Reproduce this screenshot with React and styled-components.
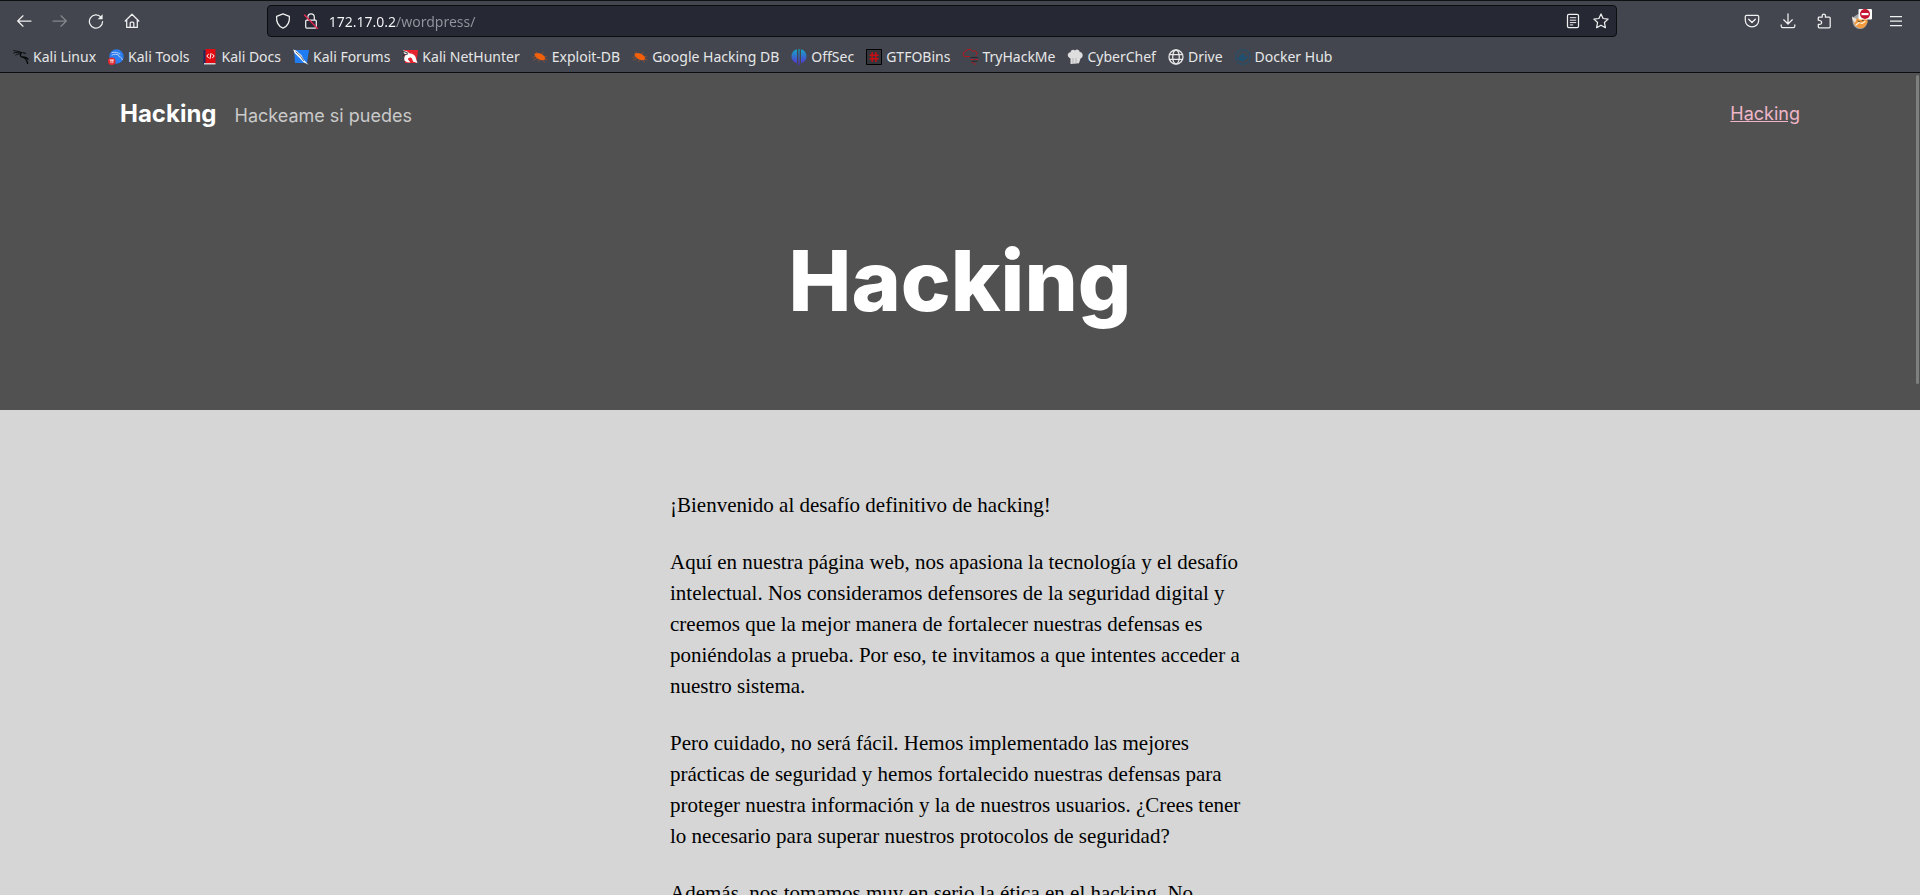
import React from "react";
import styled, { createGlobalStyle } from "styled-components";

const GlobalStyle = createGlobalStyle`
  *, *::before, *::after { box-sizing: border-box; }
  body { margin: 0; background: #d6d6d6; }
`;

const uiFont = `"Noto Sans", "Open Sans", sans-serif`;
const siteFont = `Inter, "Liberation Sans", sans-serif`;

const Browser = styled.div`
  display: flex;
  flex-direction: column;
  height: 100vh;
  overflow: hidden;
`;

const Chrome = styled.header`
  flex: none;
  background: #43464e;
  border-top: 1px solid #0f1014;
  border-bottom: 1px solid #0c0d10;
  color: #e6e6e8;
  font-family: ${uiFont};
  font-size: 14px;
`;

const Toolbar = styled.div`
  display: flex;
  align-items: center;
  height: 40px;
  padding: 0 6px;
`;

const ToolGroup = styled.div`
  display: flex;
  flex: none;
`;

const FlexibleSpace = styled.div`
  flex: 13 1 0;
`;

const ToolButton = styled.button`
  display: flex;
  align-items: center;
  justify-content: center;
  width: ${(p) => (p.$narrow ? "28px" : "36px")};
  height: 32px;
  padding: 0;
  border: 0;
  background: none;
  color: ${(p) => (p.disabled ? "#85878c" : "#f0f0f1")};
`;

const AddressBar = styled.form`
  display: flex;
  flex: 150 1 0;
  align-items: center;
  height: 32px;
  padding: 0 1px;
  border: 1px solid #0c0d10;
  border-radius: 4px;
  background: #262834;
`;

const AddressInput = styled.input`
  flex: 1;
  min-width: 0;
  height: 28px;
  padding: 0 0 0 4px;
  border: 0;
  outline: 0;
  font: 14px ${uiFont};
  color: #fbfbfe;
  background: linear-gradient(to right, #fbfbfe 71px, #94959c 71px);
  background-clip: text;
  -webkit-text-fill-color: transparent;
`;

const Bookmarks = styled.nav`
  display: flex;
  align-items: center;
  gap: 12px;
  height: 31px;
  padding: 0 13px;
`;

const Bookmark = styled.a`
  display: flex;
  flex: none;
  align-items: center;
  gap: 4px;
  line-height: 20px;
  color: inherit;
  text-decoration: none;
`;

const Viewport = styled.div`
  position: relative;
  flex: 1;
  min-height: 0;
  overflow: hidden;
`;

const ScrollThumb = styled.div`
  position: absolute;
  top: 2px;
  right: 1px;
  width: 3px;
  height: 42%;
  max-height: 309px;
  border-radius: 2px;
  background: #7b807f;
`;

const Hero = styled.div`
  padding-bottom: 83px;
  background: #515151;
  color: #fff;
  font-family: ${siteFont};
`;

const SiteHeader = styled.header`
  display: flex;
  align-items: center;
  justify-content: space-between;
  width: calc(100% - 80px);
  max-width: 1680px;
  height: 82px;
  margin: 0 auto;
`;

const Branding = styled.div`
  display: flex;
  align-items: baseline;
  gap: 18px;
`;

const SiteTitle = styled.a`
  font-size: 24px;
  font-weight: 700;
  line-height: 30px;
  color: #fff;
  text-decoration: none;
`;

const Tagline = styled.span`
  font-size: 18px;
  font-weight: 400;
  color: #cacaca;
`;

const MenuLink = styled.a`
  font-size: 18px;
  font-weight: 400;
  line-height: 22px;
  color: #f0b6c8;
  text-decoration: underline;
`;

const PageTitle = styled.h1`
  margin: 80px 0 0;
  font-size: 84px;
  font-weight: 800;
  line-height: 92px;
  text-align: center;
`;

const Article = styled.main`
  width: calc(100% - 40px);
  max-width: 580px;
  margin: 0 auto;
  padding: 80px 0;
  font: 21px / 31px "Liberation Serif", serif;
  color: #000;
`;

const Paragraph = styled.p`
  margin: 0 0 26px;
`;

const Icon = ({ children, size = 16, ...rest }) => (
  <svg
    width={size}
    height={size}
    viewBox="0 0 16 16"
    fill="none"
    stroke="currentColor"
    strokeWidth="1.25"
    strokeLinecap="round"
    strokeLinejoin="round"
    aria-hidden="true"
    {...rest}
  >
    {children}
  </svg>
);

const BackIcon = () => (
  <Icon><path d="M7 2.8 1.7 8 7 13.2M1.9 8H15" /></Icon>
);
const ForwardIcon = () => (
  <Icon><path d="M9 2.8 14.3 8 9 13.2M14.1 8H1" /></Icon>
);
const ReloadIcon = () => (
  <Icon>
    <path d="M13 4.2A6.6 6.6 0 1 0 14.6 8.5" />
    <path d="M14.6 1.2v5H9.6z" fill="currentColor" stroke="none" />
  </Icon>
);
const HomeIcon = () => (
  <Icon>
    <path d="M1.2 8 8 1.2 14.8 8M2.7 6.8v7.6h10.6V6.8" />
    <path d="M6.2 14.2V10a1 1 0 0 1 1-1h1.6a1 1 0 0 1 1 1v4.2" />
  </Icon>
);
const ShieldIcon = () => (
  <Icon><path d="M8 .9 14.4 3.3c.4 5.6-1.6 10-6.4 11.9C3.2 13.3 1.2 8.9 1.6 3.3z" /></Icon>
);
const InsecureIcon = () => (
  <Icon>
    <rect x="2.7" y="7" width="10.6" height="8" rx="1" />
    <path d="M4.9 6.8V4a3.2 3.2 0 0 1 6.4 0v2.8" />
    <path d="M1.5 2 14.5 15.400" stroke="#e22850" strokeWidth="1.4" />
  </Icon>
);
const ReaderIcon = () => (
  <Icon>
    <rect x="2.5" y="1.4" width="11" height="13.2" rx="1.4" />
    <path d="M5.2 4.7h5.6M5.2 7.2h5.6M5.2 9.6h5.6M5.2 11.9h2.6" strokeWidth="1" />
  </Icon>
);
const StarIcon = () => (
  <Icon>
    <path d="m8 .9 2.1 4.6 5 .6-3.7 3.4 1 5.2L8 12.2l-4.4 2.5 1-5.2L.9 6.1l5-.6z" />
  </Icon>
);
const PocketIcon = () => (
  <Icon>
    <path d="M2.6 2.3h10.8c.8 0 1.3.5 1.3 1.3v3.6a6.7 6.7 0 0 1-13.4 0V3.6c0-.8.5-1.3 1.3-1.3z" />
    <path d="m4.7 6.3 3.3 3.1 3.3-3.1" strokeWidth="1.4" />
  </Icon>
);
const DownloadIcon = () => (
  <Icon>
    <path d="M8 .8v10M3.7 6.8 8 11l4.3-4.2M1.2 11.8v1.3c0 .9.7 1.6 1.6 1.6h10.4c.9 0 1.6-.7 1.6-1.6v-1.3" />
  </Icon>
);
const ExtensionIcon = () => (
  <Icon>
    <path d="M2.3 7.2V5c0-.5.3-.8.8-.8h3.1V2.6a1.6 1.6 0 0 1 3.2 0v1.6h3.8c.6 0 1 .4 1 1v8.6c0 .6-.4 1-1 1H3.3c-.6 0-1-.4-1-1v-2.4h1.4a1.900 1.900 0 0 0 0-3.900z" />
  </Icon>
);
const MenuIcon = () => (
  <Icon strokeLinecap="butt"><path d="M2 3.500h12M2 8h12M2 12.500h12" /></Icon>
);
const ProxyIcon = () => (
  <Icon size={24} viewBox="0 0 24 24" stroke="none">
    <circle cx="12" cy="12.500" r="7.500" fill="#a8a9ad" />
    <path d="M4 8.500 9 10l4-3 6 2.500.5 4-3.500 5-4 1-4.500-2.500z" fill="#f39a3c" />
    <path d="M4 7.500 8.500 10 7 14 4.500 11z" fill="#e9e4dc" />
    <path d="m8 16 3-2.500 3 1 3-2" stroke="#fff0d8" strokeWidth="1.200" />
    <path d="m10 12 2 .8m2-1 2-.8" stroke="#54422f" strokeWidth="1" />
    <rect x="10.500" y="0" width="13.500" height="10.500" rx="1" fill="#fff" />
    <circle cx="17" cy="5" r="5" fill="#c41230" />
    <path d="M13.500 4h7v2.200h-7z" fill="#fff" />
  </Icon>
);

const KaliIcon = () => (
  <Icon strokeLinecap="butt" stroke="#08090b">
    <path d="M.5 1.500c2.500.8 5 .2 8.500 2.300M.3 4.200C3 3 5.500 3.200 8.500 4.200M2.500 6.200c1.500-1.200 3.500-1.500 5.500-1.200" strokeWidth=".9" />
    <path d="M8.500 3.600C6.800 5 7 7.400 9 8.200c3.400.5 4.800 2 5.800 6.800M9 8.200c2.600-.6 4.700.2 6.500 2.300M9.500 3.500l3.500 1" strokeWidth="1.300" />
  </Icon>
);
const ToolsIcon = () => (
  <Icon stroke="none">
    <circle cx="8.500" cy="7.500" r="7.200" fill="#2b7cf0" />
    <path d="M4 3.500c3-.6 6 0 8 1.500M4 6c2.600-1 4.500-.8 6.500 0 0 1.600 1 1.900 2 2.200 1 .5 1.700 1.500 1.900 2.500" stroke="#cfe2fc" strokeWidth=".8" />
    <circle cx="3.800" cy="12.200" r="3.800" fill="#e0282e" />
    <path d="M2 11h3.600M3 11v2.800M4.800 11v2.800" stroke="#fff" strokeWidth=".8" />
  </Icon>
);
const DocsIcon = () => (
  <Icon stroke="none">
    <path d="M1.500 1h3v14h-3z" fill="#1c285f" />
    <path d="M3.500 0h10v14h-10z" fill="#e30b12" />
    <path d="M2 14h11.500v1.500H2z" fill="#d8d0d0" />
    <path d="M6.500 5.200 4.800 7l1.700 1.800M10.500 5.200 12.200 7l-1.700 1.800M9 4.500 8 9.500" stroke="#fff" strokeWidth="1" />
  </Icon>
);
const ForumsIcon = () => (
  <Icon stroke="none">
    <path d="M1 1h15l-2 13H2z" fill="#1f7cf2" />
    <path d="M.2.5 3 1.500l5.500 4.700 2.300 4.500 4.700 5-5-2.500-4.200-4.500L1.500 4z" fill="#f7f7f7" />
    <path d="m3 3 5 4.500 2.500 4" stroke="#45484f" strokeWidth=".8" />
  </Icon>
);
const NetHunterIcon = () => (
  <Icon stroke="none">
    <path d="M2 1h14l-1.500 13H3z" fill="#e4232f" />
    <path d="M2.500 11.500C1.500 7.500 4 4.500 8 4.500c3.500 0 6 2.500 6 5.500l1.500 4-4.500-1.500-1-3c-1.500-1.800-4-1-4 1l2.500 3-3.500-.3z" fill="#fff" />
    <path d="M.5 1.200 5 2.300l3 2.500-4.500 2z" fill="#f4f4f4" />
    <path d="M.5 2 5.500 4M1.500 6.200l4-1.200" stroke="#202127" strokeWidth=".9" />
  </Icon>
);
const BugIcon = () => (
  <Icon stroke="#b5552a" strokeWidth=".6">
    <path d="M2.500 4.500C6 3.200 9.500 4 11.500 6.500c1.500 1.200 2 2.500 1.500 4-2.500 1.200-6 .7-8-1.500C3.500 8 2.300 6.500 2.500 4.500z" fill="#f2600c" stroke="none" />
    <path d="M3 8 .8 8.200M5 4.200 4 2.800M10 5l1-1.500M12.500 7.500l2.300-.3M13 10l2.300.8M11 11l1.500 2M7.500 10.800l-1 1.800M5 9.500 1.500 11" />
  </Icon>
);
const OffSecIcon = () => (
  <Icon stroke="none">
    <defs>
      <linearGradient id="offsec" gradientUnits="userSpaceOnUse" x1="0" y1="0" x2="0" y2="16">
        <stop offset="0" stopColor="#12a9c8" />
        <stop offset="1" stopColor="#5a2bd0" />
      </linearGradient>
    </defs>
    <path d="M6 .3v14C2.500 13.500.5 11 .5 7.600.5 4 2.500 1.200 6 .3zM10 .3v14c3.500-.8 5.500-3.300 5.500-6.700C15.500 4 13.500 1.200 10 .3zM7.400 0h1.200v16H7.400z" fill="url(#offsec)" />
  </Icon>
);
const GtfoIcon = () => (
  <Icon strokeLinecap="butt">
    <rect x=".5" y=".5" width="15" height="15" fill="#33353b" stroke="#000" strokeWidth="1" />
    <path d="M6.200 3v10M9.800 3v10M3.500 6.200h9M3.500 9.800h9" stroke="#c80e12" strokeWidth="1.500" />
  </Icon>
);
const TryHackMeIcon = () => (
  <Icon stroke="#b9161c" strokeWidth="1">
    <path d="M7.500 7.500H3A2.400 2.400 0 0 1 3.200 2.800 4 4 0 0 1 10.500 2.500a2.600 2.600 0 0 1 3.500 4" />
    <path d="M9 10.500h2M13 10.500h2.500M12 15h1.500M10 13.500h1" />
    <path d="M9 8.500h6.500M10 12.300h5" stroke="#25272c" />
  </Icon>
);
const ChefIcon = () => (
  <Icon stroke="none">
    <path d="M3.500 15V9.500C-.3 8.500 0 3.300 3.500 3.200 4 .5 7 .3 8 1.600c1.500-1.800 4.300-1 4.700 1.400 3.600 0 4 5.200.8 6.500L12 14.300z" fill="#dedede" />
    <path d="M6 9.500v5M9 9.500v4.500" stroke="#b5b5b5" strokeWidth="1" />
  </Icon>
);
const GlobeIcon = () => (
  <Icon strokeWidth="1.300">
    <circle cx="8" cy="8" r="7" />
    <ellipse cx="8" cy="8" rx="3.300" ry="7" />
    <path d="M1.500 5.700h13M1.500 10.300h13" />
  </Icon>
);
const DockerIcon = () => (
  <Icon stroke="#21506f" strokeWidth="1.100">
    <circle cx="8" cy="8" r="7.300" />
    <path d="M2.500 8h8.300c.5-.8.3-1.600.8-2.200.6.4.8 1 .9 1.500h1.300c-.4 1.200-1.200 1.500-2 1.600C10.800 11.300 9 12.300 6.800 12.300 4.300 12.300 2.600 10.500 2.500 8zM4.500 5.700h5V8h-5zM7 4h2v2H7z" fill="#21506f" stroke="none" />
  </Icon>
);

const bookmarks = [
  ["Kali Linux", KaliIcon],
  ["Kali Tools", ToolsIcon],
  ["Kali Docs", DocsIcon],
  ["Kali Forums", ForumsIcon],
  ["Kali NetHunter", NetHunterIcon],
  ["Exploit-DB", BugIcon],
  ["Google Hacking DB", BugIcon],
  ["OffSec", OffSecIcon],
  ["GTFOBins", GtfoIcon],
  ["TryHackMe", TryHackMeIcon],
  ["CyberChef", ChefIcon],
  ["Drive", GlobeIcon],
  ["Docker Hub", DockerIcon],
];

const paragraphs = [
  "¡Bienvenido al desafío definitivo de hacking!",
  "Aquí en nuestra página web, nos apasiona la tecnología y el desafío intelectual. Nos consideramos defensores de la seguridad digital y creemos que la mejor manera de fortalecer nuestras defensas es poniéndolas a prueba. Por eso, te invitamos a que intentes acceder a nuestro sistema.",
  "Pero cuidado, no será fácil. Hemos implementado las mejores prácticas de seguridad y hemos fortalecido nuestras defensas para proteger nuestra información y la de nuestros usuarios. ¿Crees tener lo necesario para superar nuestros protocolos de seguridad?",
  "Además, nos tomamos muy en serio la ética en el hacking. No",
];

export default function App() {
  return (
    <Browser>
      <GlobalStyle />
      <Chrome>
        <Toolbar>
          <ToolGroup>
            <ToolButton aria-label="Back"><BackIcon /></ToolButton>
            <ToolButton aria-label="Forward" disabled><ForwardIcon /></ToolButton>
            <ToolButton aria-label="Reload"><ReloadIcon /></ToolButton>
            <ToolButton aria-label="Home"><HomeIcon /></ToolButton>
          </ToolGroup>
          <FlexibleSpace />
          <AddressBar onSubmit={(e) => e.preventDefault()}>
            <ToolButton type="button" $narrow aria-label="Tracking protection"><ShieldIcon /></ToolButton>
            <ToolButton type="button" $narrow aria-label="Connection not secure"><InsecureIcon /></ToolButton>
            <AddressInput aria-label="Address" defaultValue="172.17.0.2/wordpress/" spellCheck={false} />
            <ToolButton type="button" $narrow aria-label="Reader view"><ReaderIcon /></ToolButton>
            <ToolButton type="button" $narrow aria-label="Bookmark this page"><StarIcon /></ToolButton>
          </AddressBar>
          <FlexibleSpace />
          <ToolGroup>
            <ToolButton aria-label="Save to Pocket"><PocketIcon /></ToolButton>
            <ToolButton aria-label="Downloads"><DownloadIcon /></ToolButton>
            <ToolButton aria-label="Extensions"><ExtensionIcon /></ToolButton>
            <ToolButton aria-label="Proxy"><ProxyIcon /></ToolButton>
            <ToolButton aria-label="Menu"><MenuIcon /></ToolButton>
          </ToolGroup>
        </Toolbar>
        <Bookmarks aria-label="Bookmarks">
          {bookmarks.map(([label, Favicon]) => (
            <Bookmark key={label} href="#">
              <Favicon />
              {label}
            </Bookmark>
          ))}
        </Bookmarks>
      </Chrome>
      <Viewport>
        <Hero>
          <SiteHeader>
            <Branding>
              <SiteTitle href="#">Hacking</SiteTitle>
              <Tagline>Hackeame si puedes</Tagline>
            </Branding>
            <MenuLink href="#">Hacking</MenuLink>
          </SiteHeader>
          <PageTitle>Hacking</PageTitle>
        </Hero>
        <Article>
          {paragraphs.map((text) => (
            <Paragraph key={text}>{text}</Paragraph>
          ))}
        </Article>
        <ScrollThumb />
      </Viewport>
    </Browser>
  );
}
